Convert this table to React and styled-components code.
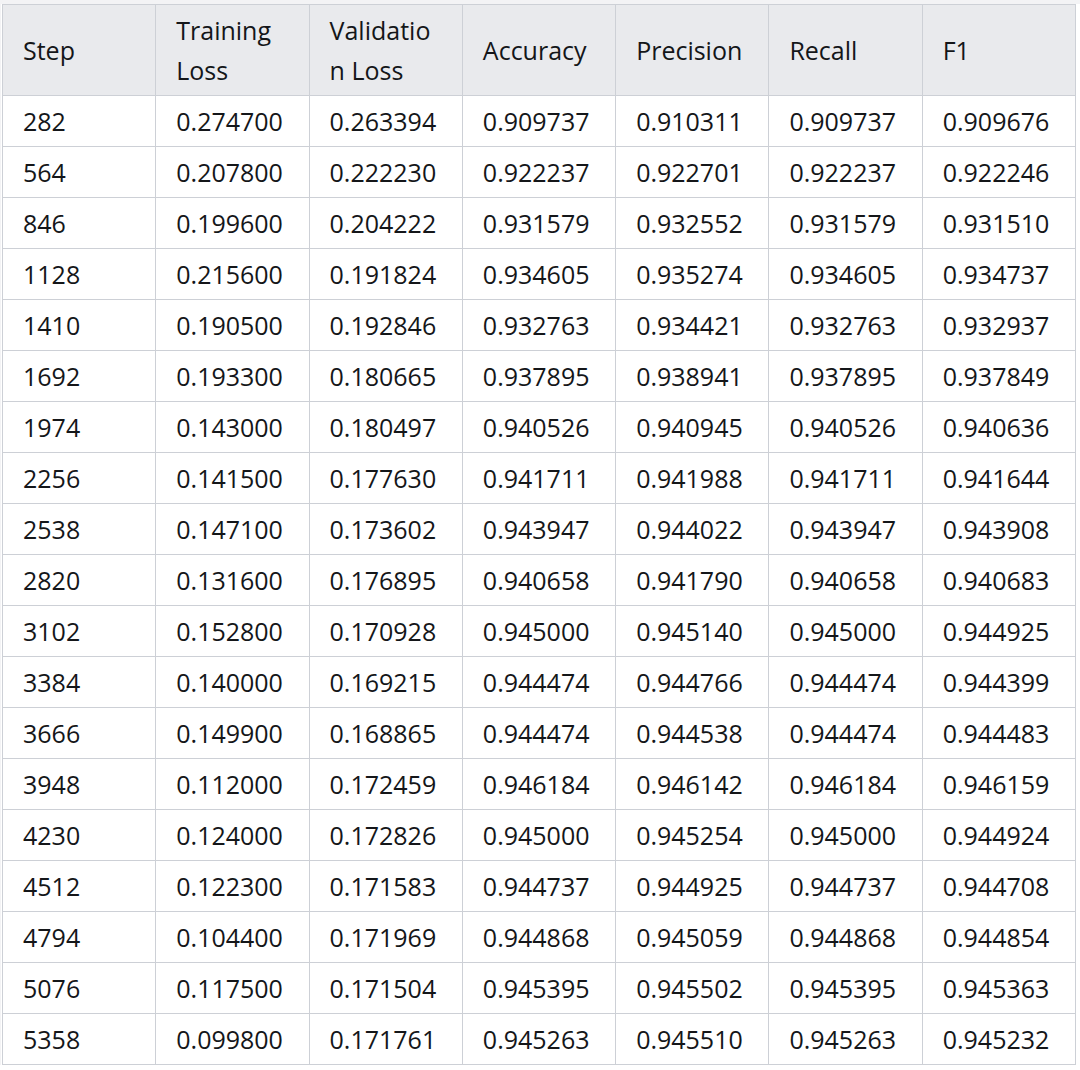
import React from 'react'
import styled, { createGlobalStyle } from 'styled-components'

const GlobalStyle = createGlobalStyle`
    body {
        margin: 0;
        background: #ffffff;
        font-family: "Open Sans", "Noto Sans", "Liberation Sans", sans-serif;
    }
`

const Page = styled.div`
    border-top: 4px solid #f3f3f5;
    border-left: 1px solid #f3f3f5;
    width: 1080px;
    box-sizing: border-box;
`

const Table = styled.table`
    border-collapse: collapse;
    table-layout: fixed;
    width: 1074px;
    margin-left: 1px;
    color: #141619;
    font-size: 25px;
`

const HeadCell = styled.th`
    background: #e9eaed;
    border: 1px solid #cdd0d6;
    font-weight: 400;
    text-align: left;
    vertical-align: middle;
    padding: 5px 20px;
    line-height: 40px;
    height: 80px;
    overflow-wrap: anywhere;
`

const Cell = styled.td`
    border: 1px solid #cdd0d6;
    padding: 0 20px;
    height: 50px;
    line-height: 50px;
    white-space: nowrap;
`

const headers = ['Step', 'Training Loss', 'Validation Loss', 'Accuracy', 'Precision', 'Recall', 'F1']

const rows = [
    ['282', '0.274700', '0.263394', '0.909737', '0.910311', '0.909737', '0.909676'],
    ['564', '0.207800', '0.222230', '0.922237', '0.922701', '0.922237', '0.922246'],
    ['846', '0.199600', '0.204222', '0.931579', '0.932552', '0.931579', '0.931510'],
    ['1128', '0.215600', '0.191824', '0.934605', '0.935274', '0.934605', '0.934737'],
    ['1410', '0.190500', '0.192846', '0.932763', '0.934421', '0.932763', '0.932937'],
    ['1692', '0.193300', '0.180665', '0.937895', '0.938941', '0.937895', '0.937849'],
    ['1974', '0.143000', '0.180497', '0.940526', '0.940945', '0.940526', '0.940636'],
    ['2256', '0.141500', '0.177630', '0.941711', '0.941988', '0.941711', '0.941644'],
    ['2538', '0.147100', '0.173602', '0.943947', '0.944022', '0.943947', '0.943908'],
    ['2820', '0.131600', '0.176895', '0.940658', '0.941790', '0.940658', '0.940683'],
    ['3102', '0.152800', '0.170928', '0.945000', '0.945140', '0.945000', '0.944925'],
    ['3384', '0.140000', '0.169215', '0.944474', '0.944766', '0.944474', '0.944399'],
    ['3666', '0.149900', '0.168865', '0.944474', '0.944538', '0.944474', '0.944483'],
    ['3948', '0.112000', '0.172459', '0.946184', '0.946142', '0.946184', '0.946159'],
    ['4230', '0.124000', '0.172826', '0.945000', '0.945254', '0.945000', '0.944924'],
    ['4512', '0.122300', '0.171583', '0.944737', '0.944925', '0.944737', '0.944708'],
    ['4794', '0.104400', '0.171969', '0.944868', '0.945059', '0.944868', '0.944854'],
    ['5076', '0.117500', '0.171504', '0.945395', '0.945502', '0.945395', '0.945363'],
    ['5358', '0.099800', '0.171761', '0.945263', '0.945510', '0.945263', '0.945232'],
]

const App = () => {
    return (
        <Page>
            <GlobalStyle />
            <Table>
                <thead>
                    <tr>
                        {headers.map(h => <HeadCell key={h}>{h}</HeadCell>)}
                    </tr>
                </thead>
                <tbody>
                    {rows.map(r => (
                        <tr key={r[0]}>
                            {r.map((v, i) => <Cell key={i}>{v}</Cell>)}
                        </tr>
                    ))}
                </tbody>
            </Table>
        </Page>
    )
}

export default App
